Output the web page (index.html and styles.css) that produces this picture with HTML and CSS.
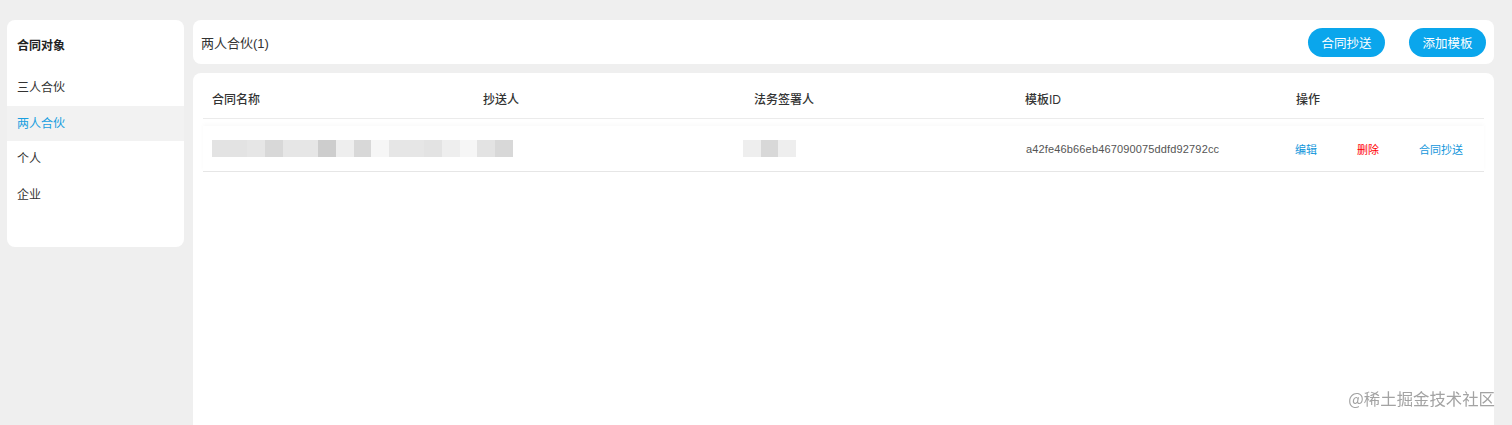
FILE: index.html
```html
<!DOCTYPE html>
<html lang="zh-CN">
<head>
    <meta charset="UTF-8">
    <meta name="viewport" content="width=device-width, initial-scale=1.0">
    <title>合同模板</title>
    <link rel="stylesheet" href="styles.css">
</head>
<body>
    <div class="layout">
        <aside class="side">
            <div class="side-title">合同对象</div>
            <div class="side-item">三人合伙</div>
            <div class="side-item active">两人合伙</div>
            <div class="side-item">个人</div>
            <div class="side-item">企业</div>
        </aside>
        <main class="main">
            <div class="topbar">
                <span class="topbar-title">两人合伙(1)</span>
                <div class="topbar-btns">
                    <button class="btn">合同抄送</button>
                    <button class="btn">添加模板</button>
                </div>
            </div>
            <div class="card">
                <div class="table-head">
                    <div class="cell">合同名称</div>
                    <div class="cell">抄送人</div>
                    <div class="cell">法务签署人</div>
                    <div class="cell">模板ID</div>
                    <div class="cell">操作</div>
                </div>
                <div class="table-row">
                    <div class="cell cell-wide">
                        <div class="mosaic">
                            <i class="m2"></i><i class="m2"></i><i class="m3"></i><i class="m4"></i><i class="m3"></i><i class="m3"></i><i class="m5"></i><i class="m1"></i><i class="m4"></i><i class="m0"></i><i class="m3"></i><i class="m3"></i><i class="m2"></i><i class="m1"></i><i class="m0"></i><i class="m2"></i><i class="m4"></i>
                        </div>
                    </div>
                    <div class="cell">
                        <div class="mosaic">
                            <i class="m1"></i><i class="m4"></i><i class="m1"></i>
                        </div>
                    </div>
                    <div class="cell id">a42fe46b66eb467090075ddfd92792cc</div>
                    <div class="cell ops">
                        <a class="link">编辑</a>
                        <a class="link red">删除</a>
                        <a class="link">合同抄送</a>
                    </div>
                </div>
            </div>
        </main>
    </div>
    <div class="watermark">@稀土掘金技术社区</div>
</body>
</html>
```

FILE: styles.css
```css
html {
    overflow: hidden;
}
body {
    margin: 0;
    background-color: #efefef;
    font-family: "Liberation Sans", "Noto Sans CJK SC", sans-serif;
    color: #333;
}
.layout {
    display: flex;
    align-items: flex-start;
    gap: 9px;
    padding: 20px 18px 0 7px;
}

.side {
    width: 177px;
    height: 227px;
    flex-shrink: 0;
    background-color: #fff;
    border-radius: 8px;
    font-size: 12px;
}
.side-title {
    height: 50px;
    line-height: 52px;
    padding-left: 10px;
    font-weight: bold;
    color: #222;
}
.side-item {
    height: 35.5px;
    line-height: 37px;
    padding-left: 10px;
    color: #333;
}
.side-item.active {
    background-color: #f2f2f2;
    color: #1a9fe0;
}

.main {
    flex: 1;
    display: flex;
    flex-direction: column;
    gap: 9px;
}
.topbar {
    height: 44px;
    background-color: #fff;
    border-radius: 8px;
    display: flex;
    align-items: center;
    justify-content: space-between;
    padding: 0 8px;
}
.topbar-title {
    font-size: 13px;
    color: #333;
}
.topbar-btns {
    display: flex;
    gap: 24px;
}
.btn {
    width: 77px;
    height: 29px;
    border: none;
    border-radius: 15px;
    background-color: #0aa6ec;
    color: #fff;
    font-family: inherit;
    font-size: 12.5px;
    padding: 0;
}

.card {
    height: 380px;
    background-color: #fff;
    border-radius: 8px 8px 0 0;
    padding: 10px 10px 0;
}
.table-head, .table-row {
    display: grid;
    grid-template-columns: 271px 271px 271px 271px 1fr;
    align-items: center;
}
.table-head {
    height: 35px;
    line-height: 35px;
    border-bottom: 1px solid #ebebeb;
    font-size: 12px;
    font-weight: 500;
    color: #333;
}
.table-row {
    margin-top: 7px;
    height: 45px;
    border-bottom: 1px solid #e6e6e6;
    box-shadow: 0 -2px 4px rgba(0, 0, 0, 0.025);
}
.table-row .cell-wide {
    grid-column: span 2;
}
.cell {
    padding-left: 9px;
}
.mosaic {
    display: flex;
    height: 17px;
}
.mosaic i {
    width: 17.7px;
    height: 17px;
}
.m0 { background-color: #f6f6f6; }
.m1 { background-color: #eeeeee; }
.m2 { background-color: #e3e3e3; }
.m3 { background-color: #e6e6e6; }
.m4 { background-color: #d8d8d8; }
.m5 { background-color: #cdcdcd; }
.table-row .cell:nth-child(2) {
    padding-left: 0;
}
.table-row .cell:nth-child(2) .mosaic {
    margin-left: -2px;
}
.id {
    font-size: 11px;
    color: #555;
    letter-spacing: 0.15px;
    padding-left: 10px;
}
.ops {
    display: flex;
    gap: 40px;
    padding-left: 8px;
}
.link {
    font-size: 11px;
    color: #1296db;
    cursor: pointer;
}
.link.red {
    color: #ff0000;
}

.watermark {
    position: fixed;
    right: 17px;
    bottom: 15px;
    font-size: 16.4px;
    color: #a3a3a3;
    font-family: "Noto Sans CJK SC", sans-serif;
}
```
